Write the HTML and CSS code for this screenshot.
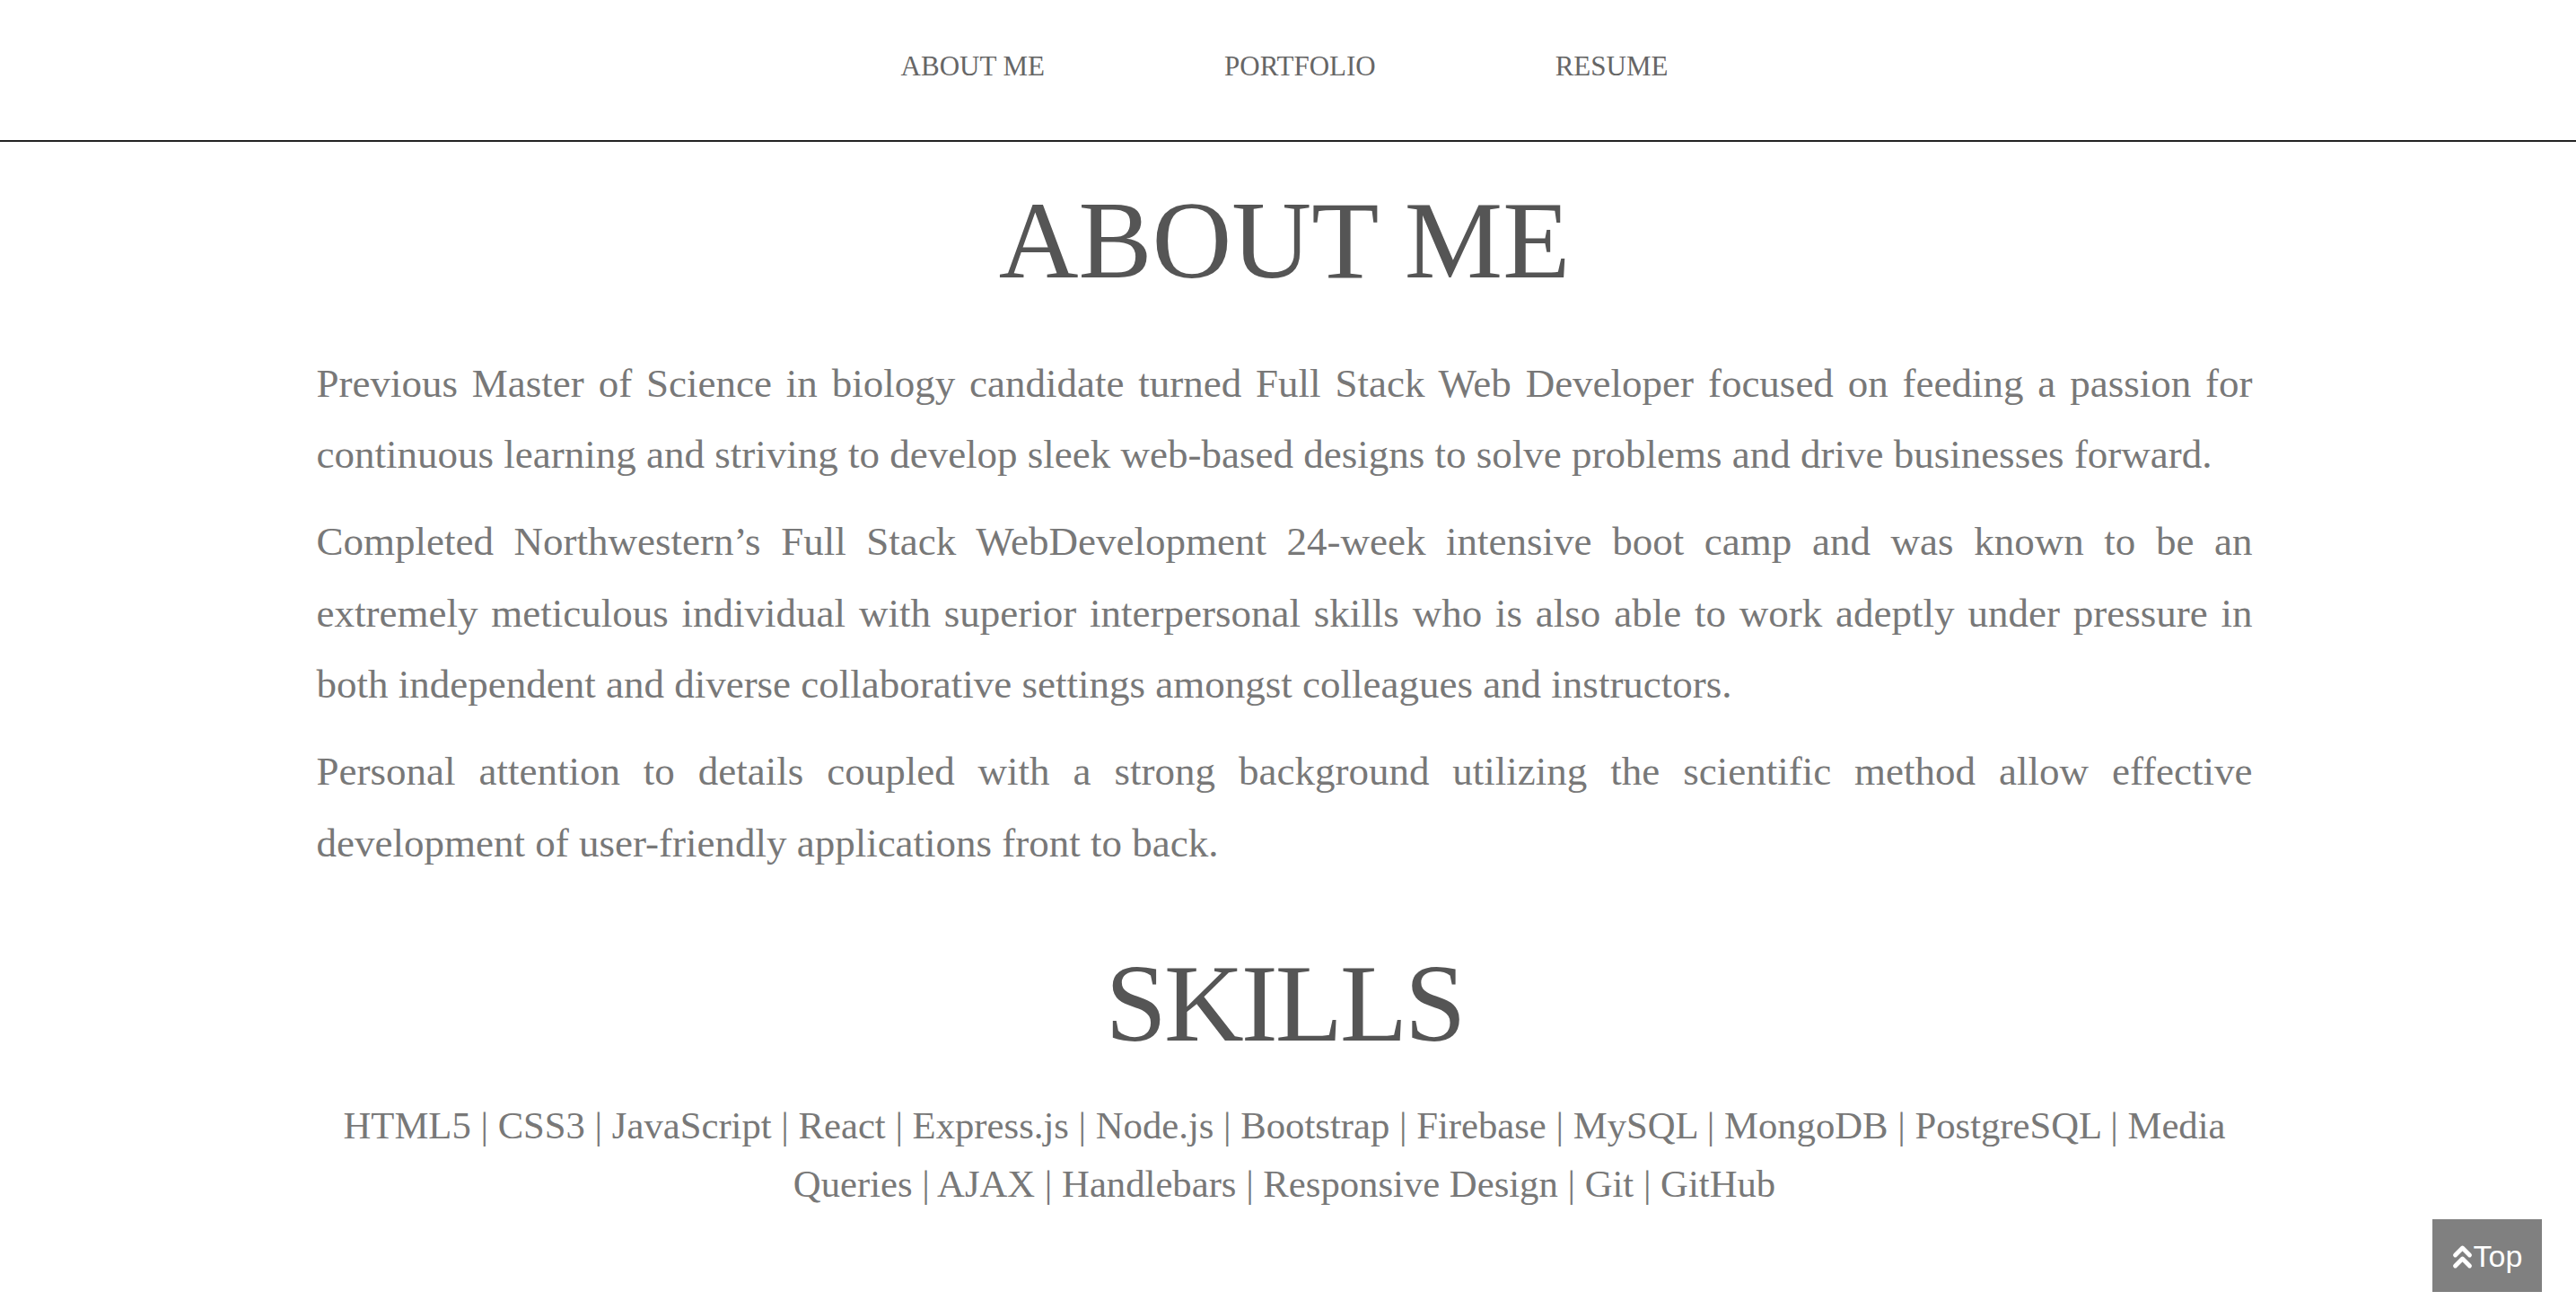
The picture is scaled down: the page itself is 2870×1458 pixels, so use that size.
FILE: index.html
```html
<!DOCTYPE html>
<html lang="en">
<head>
<meta charset="utf-8">
<title>About Me</title>
<link rel="stylesheet" href="styles.css">
</head>
<body>
<nav class="topnav">
  <ul class="topnav-list">
    <li><a class="topnav-link" href="#about">ABOUT ME</a></li>
    <li><a class="topnav-link" href="#portfolio">PORTFOLIO</a></li>
    <li><a class="topnav-link" href="#resume">RESUME</a></li>
  </ul>
</nav>
<main class="content">
  <section class="about" id="about">
    <h1 class="section-title">ABOUT ME</h1>
    <p class="bio">Previous Master of Science in biology candidate turned Full Stack Web Developer focused on feeding a passion for continuous learning and striving to develop sleek web-based designs to solve problems and drive businesses forward.</p>
    <p class="bio">Completed Northwestern’s Full Stack WebDevelopment 24-week intensive boot camp and was known to be an extremely meticulous individual with superior interpersonal skills who is also able to work adeptly under pressure in both independent and diverse collaborative settings amongst colleagues and instructors.</p>
    <p class="bio">Personal attention to details coupled with a strong background utilizing the scientific method allow effective development of user-friendly applications front to back.</p>
  </section>
  <section class="skills">
    <h1 class="section-title skills-title">SKILLS</h1>
    <p class="skills-list">HTML5 | CSS3 | JavaScript | React | Express.js | Node.js | Bootstrap | Firebase | MySQL | MongoDB | PostgreSQL | Media Queries | AJAX | Handlebars | Responsive Design | Git | GitHub</p>
  </section>
</main>
<a class="to-top" href="#">
  <svg class="to-top-icon" width="23" height="29" viewBox="0 0 23 29" aria-hidden="true">
    <polyline points="3.5,13 11.5,5 19.5,13" fill="none" stroke="#fff" stroke-width="4.8" stroke-linecap="round" stroke-linejoin="round"/>
    <polyline points="3.5,25 11.5,17 19.5,25" fill="none" stroke="#fff" stroke-width="4.8" stroke-linecap="round" stroke-linejoin="round"/>
  </svg><span class="to-top-text">Top</span>
</a>
</body>
</html>
```

FILE: styles.css
```css
html, body {
  margin: 0;
  padding: 0;
  background: #ffffff;
}

body {
  font-family: "Liberation Serif", "Times New Roman", serif;
  color: #777777;
}

.topnav {
  border-bottom: 2px solid #222222;
  padding: 55px 0 64px;
}

.topnav-list {
  list-style: none;
  margin: 0;
  padding: 0 8px 0 0;
  display: flex;
  justify-content: center;
  gap: 200px;
}

.topnav-link {
  display: block;
  font-size: 31px;
  line-height: 37px;
  color: #666666;
  text-decoration: none;
}

.content {
  max-width: 2157px;
  margin: 0 auto;
  padding-right: 8px;
}

.section-title {
  margin: 36px 0 0;
  font-size: 123px;
  line-height: 1.2;
  font-weight: normal;
  text-align: center;
  color: #555555;
}

.bio {
  margin: 46px 0 0;
  font-size: 45px;
  line-height: 79.5px;
  text-align: justify;
  color: #787878;
}

.bio + .bio {
  margin-top: 17.5px;
}

.skills-title {
  margin-top: 65px;
  letter-spacing: -3px;
}

.skills-list {
  margin: 29px 0 0;
  font-size: 42.7px;
  line-height: 65px;
  text-align: center;
  color: #787878;
}

.to-top {
  position: fixed;
  right: 38px;
  bottom: 19px;
  width: 122px;
  height: 81px;
  background: #808080;
  display: flex;
  align-items: center;
  justify-content: center;
  gap: 1px;
  text-decoration: none;
}

.to-top-icon {
  display: block;
  margin-top: 2px;
}

.to-top-text {
  font-family: "Liberation Sans", Arial, sans-serif;
  font-size: 34px;
  line-height: 1;
  color: #ffffff;
}
```
